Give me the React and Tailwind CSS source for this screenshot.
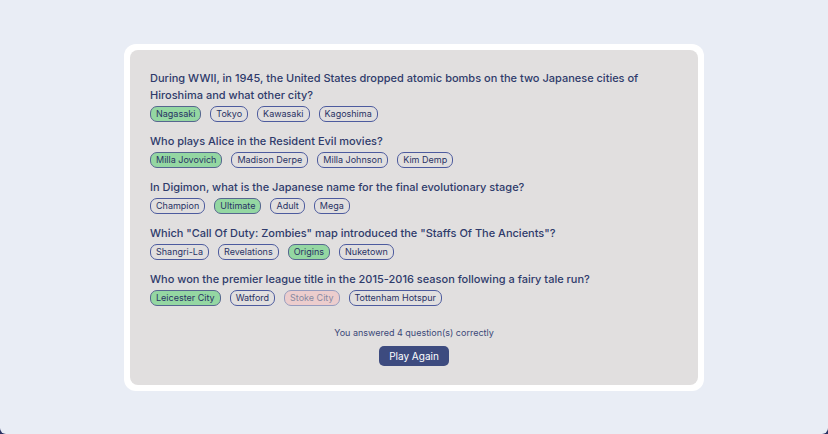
import React from "react";

const questions = [
  {
    q: "During WWII, in 1945, the United States dropped atomic bombs on the two Japanese cities of Hiroshima and what other city?",
    a: [["Nagasaki", "correct"], ["Tokyo"], ["Kawasaki"], ["Kagoshima"]],
  },
  {
    q: "Who plays Alice in the Resident Evil movies?",
    a: [["Milla Jovovich", "correct"], ["Madison Derpe"], ["Milla Johnson"], ["Kim Demp"]],
  },
  {
    q: "In Digimon, what is the Japanese name for the final evolutionary stage?",
    a: [["Champion"], ["Ultimate", "correct"], ["Adult"], ["Mega"]],
  },
  {
    q: 'Which "Call Of Duty: Zombies" map introduced the "Staffs Of The Ancients"?',
    a: [["Shangri-La"], ["Revelations"], ["Origins", "correct"], ["Nuketown"]],
  },
  {
    q: "Who won the premier league title in the 2015-2016 season following a fairy tale run?",
    a: [["Leicester City", "correct"], ["Watford"], ["Stoke City", "wrong"], ["Tottenham Hotspur"]],
  },
];

function Pill({ label, state }) {
  let cls =
    "h-[16px] flex items-center px-[5px] rounded-[7px] border text-[9px] leading-none ";
  if (state === "correct") cls += "bg-[#94d7a2] border-[#56668f] text-[#293264]";
  else if (state === "wrong") cls += "bg-[#f8bcbc] border-[#4d5b9e] text-[#293264] opacity-50";
  else cls += "border-[#4d5b9e] text-[#293264]";
  return <span className={cls}>{label}</span>;
}

export default function App() {
  return (
    <div className="bg-[#293264]" style={{ fontFamily: "Inter, 'Noto Sans', sans-serif" }}>
      <div className="h-[434px] w-full bg-[#e9edf5] rounded-b-[6px] flex items-center justify-center">
        <div className="w-[580px] bg-white rounded-[12px] p-[6px]">
          <div className="bg-[#e1dfdf] rounded-[8px] px-[20px] pt-[20px] pb-[19px]">
            <div className="flex flex-col gap-[11px]">
              {questions.map((item, i) => (
                <div key={i}>
                  <h2 className="text-[11px] leading-[17px] font-medium text-[#2f3b6b] mb-[2px]">
                    {item.q}
                  </h2>
                  <div className="flex gap-[9px]">
                    {item.a.map(([label, state]) => (
                      <Pill key={label} label={label} state={state} />
                    ))}
                  </div>
                </div>
              ))}
            </div>
            <div className="flex flex-col items-center mt-[20px]">
              <p className="text-[9px] leading-[13px] text-[#3b4878]">
                You answered 4 question(s) correctly
              </p>
              <button className="mt-[7px] w-[70px] h-[20px] rounded-[5px] bg-[#3d4b7f] text-white text-[10px] leading-none">
                Play Again
              </button>
            </div>
          </div>
        </div>
      </div>
    </div>
  );
}
